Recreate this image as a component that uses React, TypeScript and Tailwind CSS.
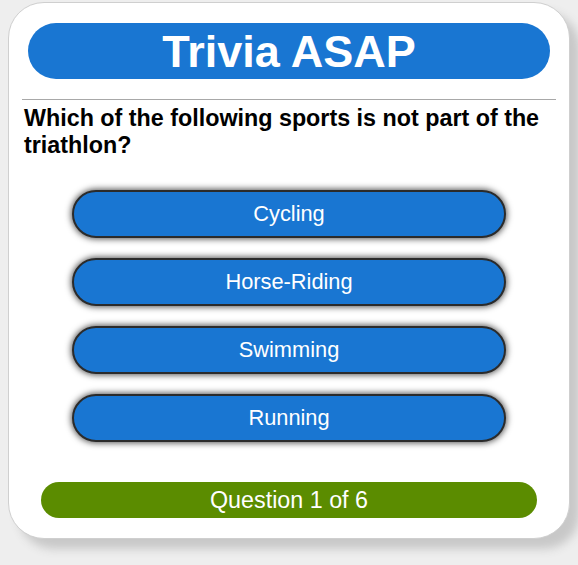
const answers = ["Cycling", "Horse-Riding", "Swimming", "Running"];

export default function App() {
	return (
		<div className="min-h-[565px] bg-[#eeeeee] pt-[2px] pl-[8px] font-['Liberation_Sans',Arial,sans-serif]">
			<div className="w-[562px] h-[537px] rounded-[36px] border border-[#cfcfcf] bg-white px-[13px] pt-[20px] shadow-[10px_10px_10px_#c8c8c8]">
				{/* Header */}
				<div className="mx-[6px] flex h-[56px] items-center justify-center rounded-full bg-[#1976d2]">
					<h1 className="text-[45px] font-bold leading-none text-white">Trivia ASAP</h1>
				</div>

				<hr className="mt-[20px] border-t border-[#a8a8a8]" />

				{/* Question */}
				<p className="mt-[5px] px-[2px] text-[23.3px] font-bold leading-[27px] text-black">
					Which of the following sports is not part of the triathlon?
				</p>

				{/* Answers */}
				<div className="mt-[31px] flex flex-col items-center gap-[20px]">
					{answers.map((a) => (
						<button
							className="flex h-[48px] w-[434px] items-center justify-center rounded-full border-2 border-[#2b2b2b] bg-[#1976d2] text-[21.8px] text-white shadow-[0_0_6px_1px_#555]"
							key={a}
						>
							{a}
						</button>
					))}
				</div>

				{/* Progress */}
				<div className="mt-[40px] flex justify-center">
					<div className="flex h-[36px] w-[496px] items-center justify-center rounded-full bg-[#5b8c00] text-[23.3px] text-white">
						Question 1 of 6
					</div>
				</div>
			</div>
		</div>
	);
}
